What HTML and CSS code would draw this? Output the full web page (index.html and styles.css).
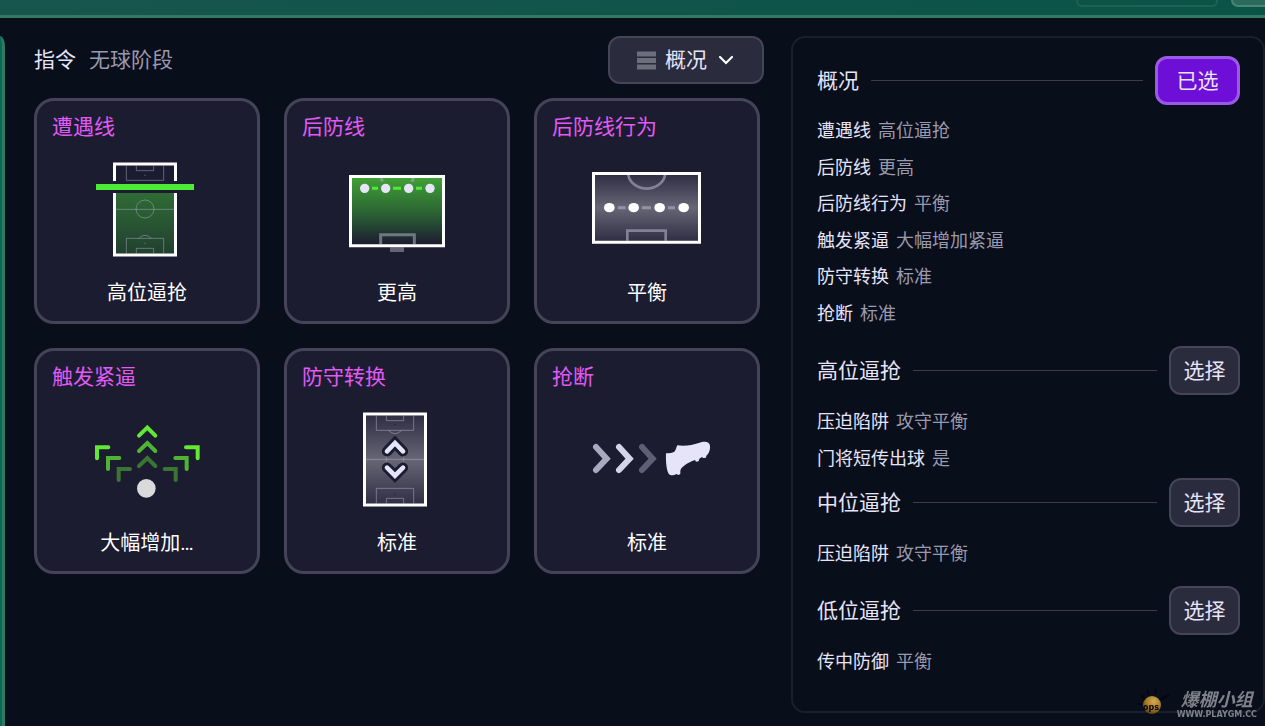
FILE: index.html
```html
<!DOCTYPE html>
<html lang="zh-CN">
<head>
    <meta charset="UTF-8">
    <meta name="viewport" content="width=device-width, initial-scale=1.0">
    <title>指令 - 无球阶段</title>
    <link rel="stylesheet" href="styles.css">
</head>
<body>
    <header class="topbar">
        <div class="topbar-box"></div>
        <div class="topbar-pill"></div>
    </header>

    <div class="layout">
        <div class="side-edge"></div>

        <main class="instructions">
            <div class="toolbar">
                <h1>指令</h1>
                <span class="phase">无球阶段</span>
                <div class="view-select">
                    <svg class="icon-rows" viewBox="0 0 19 19" aria-hidden="true">
                        <path d="M0 0.500h19v5H0zM0 7h19v5H0zM0 13.500h19v5H0z" fill="#6c6d7d"/>
                    </svg>
                    <select aria-label="视图">
                        <option>概况</option>
                    </select>
                    <svg class="icon-chevron" viewBox="0 0 16 10" aria-hidden="true">
                        <path d="M2 2l6 6 6-6" fill="none" stroke="#fff" stroke-width="2.200" stroke-linecap="round"/>
                    </svg>
                </div>
            </div>

            <div class="cards">
                <button class="card" type="button">
                    <span class="card-title">遭遇线</span>
                    <svg class="art" viewBox="147 138 408 408" aria-hidden="true">
                        <defs>
                            <linearGradient id="greenBlock" x1="0" y1="0" x2="0" y2="1">
                                <stop offset="0" stop-color="#2f6b35"/>
                                <stop offset="1" stop-color="#21402f"/>
                            </linearGradient>
                        </defs>
                        <path d="M258 294h174v182H258z" fill="url(#greenBlock)"/>
                        <g fill="none" stroke="#a9a9bd" stroke-opacity=".5" stroke-width="3">
                            <path d="M289 212v44h112v-44M319 212v15h52v-15"/>
                            <path d="M258 343h174M289 475v-45h112v45M319 475v-15h52v15M326 430q19-18 38 0"/>
                            <circle cx="345" cy="342" r="27"/>
                            <path d="M343 241h4M343 445h4"/>
                        </g>
                        <path d="M253.500 258v-51h183v51M253.500 294v186h183v-186" fill="none" stroke="#fff" stroke-width="9"/>
                        <path d="M198 267h294v18H198z" fill="#4fea35"/>
                    </svg>
                    <span class="card-value">高位逼抢</span>
                </button>

                <button class="card" type="button">
                    <span class="card-title">后防线</span>
                    <svg class="art" viewBox="147 138 408 408" aria-hidden="true">
                        <defs>
                            <linearGradient id="greenFade" x1="0" y1="0" x2="0" y2="1">
                                <stop offset="0" stop-color="#40a036"/>
                                <stop offset=".5" stop-color="#2c6734"/>
                                <stop offset="1" stop-color="#1c1c30"/>
                            </linearGradient>
                        </defs>
                        <path d="M216 248h270v200H216z" fill="url(#greenFade)"/>
                        <path d="M303 249l5 11M400 249l-4 11M302 448v-29h101v29" fill="none" stroke="#a5a8b8" stroke-opacity=".6" stroke-width="9"/>
                        <path d="M330 457h42v14h-42z" fill="#646479"/>
                        <path d="M211.500 244.500h279v208h-279z" fill="none" stroke="#fff" stroke-width="9"/>
                        <path d="M276 280h18M339 280h24M408 280h18" stroke="#4fea35" stroke-width="9"/>
                        <g fill="#e6e4f8">
                            <circle cx="254" cy="280" r="14"/>
                            <circle cx="317" cy="280" r="14"/>
                            <circle cx="386" cy="280" r="14"/>
                            <circle cx="450" cy="280" r="14"/>
                        </g>
                    </svg>
                    <span class="card-value">更高</span>
                </button>

                <button class="card" type="button">
                    <span class="card-title">后防线行为</span>
                    <svg class="art" viewBox="147 138 408 408" aria-hidden="true">
                        <defs>
                            <linearGradient id="greyBand" x1="0" y1="0" x2="0" y2="1">
                                <stop offset="0" stop-color="#2f2e43"/>
                                <stop offset=".5" stop-color="#676676"/>
                                <stop offset="1" stop-color="#302f44"/>
                            </linearGradient>
                        </defs>
                        <path d="M195 239h309v198H195z" fill="url(#greyBand)"/>
                        <path d="M295 239c2 24 29 42 55 42s53-18 55-42M292 437v-30h115v30" fill="none" stroke="#828196" stroke-width="8"/>
                        <path d="M190.500 235.500h318v206h-318z" fill="none" stroke="#fff" stroke-width="9"/>
                        <path d="M264 338h23M336 338h27M414 338h21" stroke="#9291a8" stroke-width="9"/>
                        <g fill="#fff">
                            <ellipse cx="238" cy="338" rx="16" ry="14"/>
                            <ellipse cx="311" cy="338" rx="16" ry="14"/>
                            <ellipse cx="389" cy="338" rx="16" ry="14"/>
                            <ellipse cx="461" cy="338" rx="16" ry="14"/>
                        </g>
                    </svg>
                    <span class="card-value">平衡</span>
                </button>

                <button class="card" type="button">
                    <span class="card-title">触发紧逼</span>
                    <svg class="art" viewBox="147 138 408 408" aria-hidden="true">
                        <g fill="none" stroke-width="12" stroke-linecap="round">
                            <path d="M327 272l25-24 24 24M201 340v-33h34M468 307h35v33" stroke="#63e835"/>
                            <path d="M327 318l25-24 24 24M234 372v-33h34M436 339h34v33" stroke="#4fb434"/>
                            <path d="M327 363l25-24 24 24M266 405v-33h34M404 372h33v33" stroke="#3b7433"/>
                        </g>
                        <circle cx="349" cy="430" r="28" fill="#dadada"/>
                    </svg>
                    <span class="card-value">大幅增加…</span>
                </button>

                <button class="card" type="button">
                    <span class="card-title">防守转换</span>
                    <svg class="art" viewBox="147 138 408 408" aria-hidden="true">
                        <path d="M258 212h174v264H258z" fill="url(#greyBand)"/>
                        <g fill="none" stroke="#a9a9bd" stroke-opacity=".55" stroke-width="3">
                            <path d="M289 212v44h112v-44M319 212v15h52v-15M326 257q19 18 38 0"/>
                            <path d="M258 343h174M289 475v-45h112v45M319 475v-15h52v15"/>
                            <path d="M319 334v16M371 334v16"/>
                            <path d="M342 239h5M342 447h5" stroke="#252438" stroke-opacity="1"/>
                        </g>
                        <path d="M253.500 207h183v273h-183z" fill="none" stroke="#fff" stroke-width="9"/>
                        <g fill="none" stroke-linecap="round">
                            <path d="M321 319l24-25 24 25M321 368l24 24 24-24" stroke="#1c1c30" stroke-width="31"/>
                            <path d="M321 319l24-25 24 25M321 368l24 24 24-24" stroke="#e6e4f8" stroke-width="14"/>
                        </g>
                    </svg>
                    <span class="card-value">标准</span>
                </button>

                <button class="card" type="button">
                    <span class="card-title">抢断</span>
                    <svg class="art" viewBox="147 138 408 408" aria-hidden="true">
                        <g fill="none" stroke-width="18" stroke-linecap="round">
                            <path d="M198 306l32 35-32 34" stroke="#aaa9bf"/>
                            <path d="M267 306l32 35-32 34" stroke="#d6d4e8"/>
                            <path d="M336 306l32 35-32 34" stroke="#5f5e74"/>
                        </g>
                        <path d="M408 325c10-1 19-1 25-5 5-5 5-12 9-19 24 3 46-1 64-7 12-4 23-5 29-1 7 5 6 17 3 26-2 6-6 11-9 13l-1 6-9 1-3-3-8 5-2 8-8 1-3-5c-17 6-34 16-42 26-2 4-2 7-2 9v7l-6 3-6-3c-7 5-18 5-23-1-7-10-9-40-8-61z" fill="#e6e4f8"/>
                    </svg>
                    <span class="card-value">标准</span>
                </button>
            </div>
        </main>

        <aside class="panel">
            <section>
                <div class="section-head">
                    <h2>概况</h2>
                    <button class="pick selected" type="button">已选</button>
                </div>
                <dl class="summary">
                    <div><dt>遭遇线</dt><dd>高位逼抢</dd></div>
                    <div><dt>后防线</dt><dd>更高</dd></div>
                    <div><dt>后防线行为</dt><dd>平衡</dd></div>
                    <div><dt>触发紧逼</dt><dd>大幅增加紧逼</dd></div>
                    <div><dt>防守转换</dt><dd>标准</dd></div>
                    <div><dt>抢断</dt><dd>标准</dd></div>
                </dl>
            </section>
            <section class="tight">
                <div class="section-head">
                    <h2>高位逼抢</h2>
                    <button class="pick" type="button">选择</button>
                </div>
                <dl>
                    <div><dt>压迫陷阱</dt><dd>攻守平衡</dd></div>
                    <div><dt>门将短传出球</dt><dd>是</dd></div>
                </dl>
            </section>
            <section>
                <div class="section-head">
                    <h2>中位逼抢</h2>
                    <button class="pick" type="button">选择</button>
                </div>
                <dl>
                    <div><dt>压迫陷阱</dt><dd>攻守平衡</dd></div>
                </dl>
            </section>
            <section>
                <div class="section-head">
                    <h2>低位逼抢</h2>
                    <button class="pick" type="button">选择</button>
                </div>
                <dl>
                    <div><dt>传中防御</dt><dd>平衡</dd></div>
                </dl>
            </section>
        </aside>
    </div>

    <div class="watermark">
        <svg viewBox="0 0 36 36" aria-hidden="true">
            <defs>
                <radialGradient id="bulb" cx=".6" cy=".3" r=".7">
                    <stop offset="0" stop-color="#cfab55"/>
                    <stop offset=".6" stop-color="#a87b26"/>
                    <stop offset="1" stop-color="#5f4315"/>
                </radialGradient>
            </defs>
            <path d="M6 11l4 4M12 6l2 5M21 5l-1 5M3 20h4M26 15l8-4" stroke="#04060b" stroke-width="2"/>
            <circle cx="17" cy="21" r="9" fill="url(#bulb)"/>
            <text x="8" y="26">ops</text>
        </svg>
        <div class="watermark-text">
            <span class="watermark-name">爆棚小组</span>
            <span class="watermark-url">WWW.PLAYGM.CC</span>
        </div>
    </div>
</body>
</html>
```
FILE: styles.css
```css
* {
    box-sizing: border-box;
}
body {
    margin: 0;
    min-height: 100vh;
    display: flex;
    flex-direction: column;
    overflow: hidden;
    background-color: #090e1b;
    color: #e6e4f8;
    font-family: Roboto, "Noto Sans CJK SC", sans-serif;
    font-size: 21px;
    line-height: 28px;
}
h1, h2, dl, dd {
    margin: 0;
    font-size: inherit;
    font-weight: 400;
}
button, select {
    font: inherit;
    color: inherit;
    cursor: pointer;
}

/* top bar */
.topbar {
    height: 18px;
    display: flex;
    justify-content: flex-end;
    align-items: flex-start;
    gap: 13px;
    background: linear-gradient(90deg, #17564d, #0a5347);
    border-bottom: 3px solid #337860;
}
.topbar-box {
    width: 142px;
    height: 7px;
    border: 2px solid #1f6253;
    border-top: 0;
    border-radius: 0 0 6px 6px;
}
.topbar-pill {
    width: 34px;
    height: 7px;
    background: #2a6b5e;
    border: 2px solid #4a8577;
    border-top: 0;
    border-right: 0;
    border-radius: 0 0 0 12px;
}

.layout {
    flex: 1;
    display: grid;
    grid-template-columns: 5px minmax(0, 786fr) minmax(0, 474fr);
    padding-top: 18px;
}
.side-edge {
    background: #086b58;
    border-right: 3px solid #337860;
    border-top-right-radius: 5px 10px;
}

/* instructions */
.instructions {
    margin: 0 27px 0 29px;
}
.toolbar {
    display: flex;
    align-items: center;
    gap: 13px;
    height: 48px;
    margin-bottom: 14px;
}
.phase {
    color: #9a99ad;
}
.view-select {
    position: relative;
    margin-left: auto;
}
.view-select select {
    appearance: none;
    display: block;
    width: 156px;
    height: 48px;
    padding: 0 36px 0 55px;
    background: #2a2b3c;
    border: 2px solid #444558;
    border-radius: 12px;
}
.icon-rows, .icon-chevron {
    position: absolute;
    pointer-events: none;
}
.icon-rows {
    left: 29px;
    top: 15px;
    width: 19px;
    height: 19px;
}
.icon-chevron {
    right: 30px;
    top: 19px;
    width: 16px;
    height: 10px;
}
.cards {
    display: grid;
    grid-template-columns: repeat(3, 1fr);
    gap: 24px;
    padding-right: 4px;
}
.card {
    display: flex;
    flex-direction: column;
    align-items: center;
    padding: 12px 15px;
    background: #1c1c30;
    border: 3px solid #444358;
    border-radius: 20px;
}
.card-title {
    align-self: flex-start;
    color: #e05af5;
}
.art {
    width: 136px;
    height: 136px;
}
.card-value {
    color: #fff;
    font-size: 20px;
    line-height: 32px;
}

/* summary panel */
.panel {
    align-self: start;
    height: 677px;
    padding: 18px 23px 0 24px;
    border: 2px solid #1a1f2d;
    border-radius: 14px;
}
.panel section {
    margin-bottom: 14px;
}
.panel .tight {
    margin-bottom: 1px;
}
.section-head {
    display: flex;
    align-items: center;
    gap: 12px;
    margin-bottom: 8px;
}
.section-head::after {
    content: "";
    order: 1;
    flex: 1;
    height: 1px;
    background: #3a3c4a;
}
.pick {
    order: 2;
    width: 71px;
    height: 49px;
    padding: 0;
    background: #2a2b3c;
    border: 2px solid #444558;
    border-radius: 12px;
}
.pick.selected {
    width: 85px;
    background: #6d0fd6;
    border: 3px solid #9a5ae6;
}
dl {
    font-size: 18px;
}
dl div {
    display: flex;
    align-items: center;
    gap: 7px;
    height: 37px;
}
dd {
    color: #9a99ad;
}
.summary {
    display: grid;
    grid-auto-rows: 1fr;
    height: 219px;
}
.summary div {
    height: auto;
}

/* site mark over the corner of the panel */
.watermark {
    position: fixed;
    right: 8px;
    bottom: 6px;
    display: flex;
    align-items: flex-end;
    gap: 6px;
    color: #80838c;
}
.watermark svg {
    width: 36px;
    height: 36px;
}
.watermark text {
    font: bold 8px "DejaVu Sans", sans-serif;
    fill: #05070d;
}
.watermark-text {
    display: flex;
    flex-direction: column;
    align-items: center;
}
.watermark-name {
    font-size: 18px;
    font-style: italic;
    font-weight: 700;
    line-height: 20px;
}
.watermark-url {
    font: bold 8px/10px "DejaVu Sans", sans-serif;
}
```
